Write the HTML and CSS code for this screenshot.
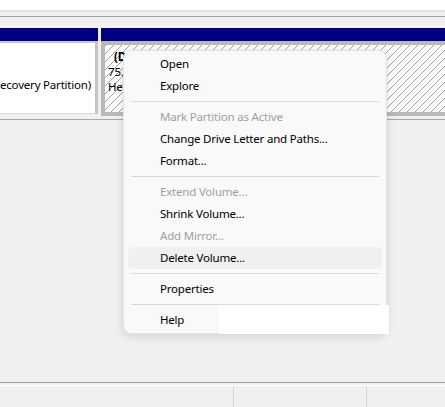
FILE: index.html
```html
<!DOCTYPE html>
<html lang="en">
<head>
<meta charset="utf-8">
<title>Disk Management</title>
<link rel="stylesheet" href="styles.css">
</head>
<body>
<div class="app">
  <div class="list-bottom"></div>
  <div class="splitter">
    <div class="splitter-line"></div>
    <div class="pane-top"></div>
  </div>
  <div class="disk-row">
    <div class="part part-recovery">
      <div class="part-head"></div>
      <div class="part-body">
        <span class="part-line">Healthy (Recovery Partition)</span>
      </div>
    </div>
    <div class="part part-data">
      <div class="part-head"></div>
      <div class="part-body hatch">
        <div class="part-label">(D:)</div>
        <div class="part-text">75.00 GB NTFS</div>
        <div class="part-text">Healthy (Basic Data Partition)</div>
      </div>
    </div>
  </div>
  <div class="row-divider"></div>
  <div class="pane-rest"></div>
  <div class="status">
    <div class="status-cell cell-1"></div>
    <div class="status-cell cell-2"></div>
    <div class="status-cell cell-3"></div>
  </div>

  <div class="menu">
    <div class="item">Open</div>
    <div class="item">Explore</div>
    <div class="sep"></div>
    <div class="item disabled">Mark Partition as Active</div>
    <div class="item">Change Drive Letter and Paths...</div>
    <div class="item">Format...</div>
    <div class="sep"></div>
    <div class="item disabled">Extend Volume...</div>
    <div class="item">Shrink Volume...</div>
    <div class="item disabled">Add Mirror...</div>
    <div class="item hover">Delete Volume...</div>
    <div class="sep"></div>
    <div class="item">Properties</div>
    <div class="sep"></div>
    <div class="item">Help</div>
  </div>
  <div class="blank-tip"></div>
</div>
</body>
</html>
```

FILE: styles.css
```css
html, body {
  margin: 0;
  padding: 0;
}
body {
  width: 445px;
  height: 407px;
  overflow: hidden;
  background: #f0f0f0;
  font-family: "Noto Sans", "Open Sans", sans-serif;
  font-size: 11.5px;
  letter-spacing: -0.2px;
  color: #000;
}
.app {
  position: relative;
  width: 445px;
  height: 407px;
  display: flex;
  flex-direction: column;
  overflow: hidden;
}
.list-bottom {
  height: 10px;
  background: #fff;
  flex: none;
}
.splitter {
  flex: none;
  height: 18px;
  box-sizing: border-box;
  border-top: 2px solid #e3e3e3;
  background: #f0f0f0;
  display: flex;
  flex-direction: column;
}
.splitter-line {
  margin-top: 4px;
  height: 1px;
  background: #a0a0a0;
}
.pane-top {
  margin-top: auto;
  margin-bottom: 1px;
  height: 1px;
  background: #fafafa;
}
.disk-row {
  flex: none;
  height: 88px;
  display: flex;
  overflow: hidden;
  background: #f0f0f0;
}
.part {
  display: flex;
  flex-direction: column;
  flex: none;
}
.part-head {
  height: 13px;
  background: #000080;
  flex: none;
}
.part-recovery {
  width: 98px;
}
.part-recovery .part-body {
  height: 73px;
  box-sizing: border-box;
  background: #fff;
  border-top: 2px solid #c8c8c8;
  border-bottom: 1px solid #d8d8d8;
  border-right: 3px solid #c4c4c4;
  padding: 34px 4px 0 0;
  display: flex;
  justify-content: flex-end;
  overflow: hidden;
  line-height: 15px;
}
.part-line {
  white-space: nowrap;
  flex: none;
}
.part-data {
  width: 360px;
  margin-left: 3px;
}
.part-data .part-body {
  flex: 1;
  box-sizing: border-box;
  border: 4px solid #b9b9b9;
  border-right: 0;
  padding: 4px 0 0 3px;
  line-height: 15px;
  white-space: nowrap;
}
.hatch {
  background-color: #fff;
  background-image: repeating-linear-gradient(135deg, #9c9c9c 0, #9c9c9c 0.75px, #ffffff 0.75px, #ffffff 5.657px);
}
.part-label {
  font-weight: bold;
  padding-left: 6px;
}
.row-divider {
  flex: none;
  margin-top: 3px;
  height: 1px;
  background: #a8a8a8;
}
.pane-rest {
  flex: 1;
  background: #f0f0f0;
}
.status {
  flex: none;
  height: 25px;
  box-sizing: border-box;
  border-top: 1px solid #a0a0a0;
  display: flex;
  flex-direction: row;
  padding-top: 4px;
  position: relative;
  background: #f0f0f0;
}
.status::before {
  content: "";
  position: absolute;
  left: 0;
  right: 0;
  top: 2px;
  height: 1px;
  background: #ffffff;
}
.status-cell {
  height: 100%;
  box-sizing: border-box;
}
.cell-1 {
  width: 234px;
  border-right: 1px solid #d2d2d2;
}
.cell-2 {
  width: 133px;
  border-right: 1px solid #d2d2d2;
}
.cell-3 {
  flex: 1;
}

/* context menu */
.menu {
  position: absolute;
  left: 123px;
  top: 50px;
  width: 264px;
  box-sizing: border-box;
  padding: 2px 4px 2px 4px;
  background: #f9f9f9;
  border: 1px solid #e3e3e3;
  border-radius: 8px;
  box-shadow: 0 2px 8px rgba(0, 0, 0, 0.14);
  z-index: 10;
}
.item {
  height: 22px;
  line-height: 22px;
  padding-left: 32px;
  border-radius: 4px;
  white-space: nowrap;
  color: #000;
}
.item.disabled {
  color: #a0a0a0;
}
.item.hover {
  background: #f0f0f0;
}
.sep {
  height: 9px;
  margin: 0 3px;
  display: flex;
  flex-direction: column;
}
.sep::before {
  content: "";
  margin-top: 4px;
  height: 1px;
  background: #d9d9d9;
}
.blank-tip {
  position: absolute;
  left: 219px;
  top: 305px;
  width: 170px;
  height: 29px;
  background: #fff;
  z-index: 11;
}
```
